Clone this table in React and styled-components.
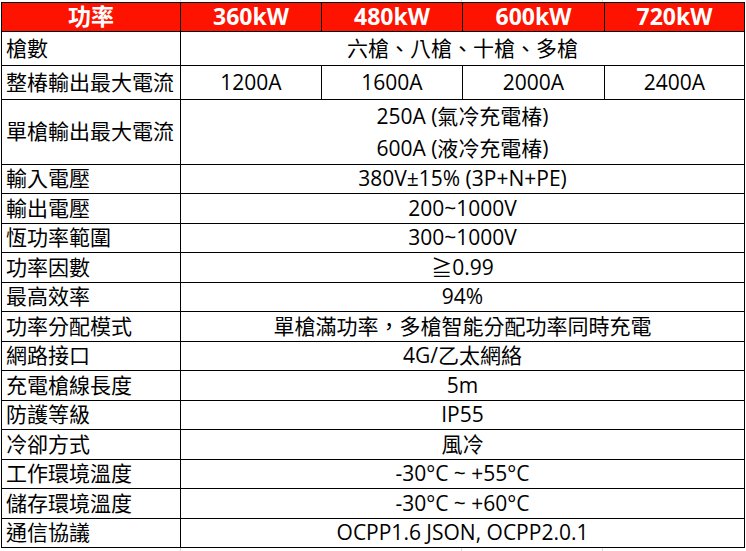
import React from 'react';
import styled, { createGlobalStyle } from 'styled-components';

const GlobalStyle = createGlobalStyle`
  html, body {
    margin: 0;
    padding: 0;
    background-color: #ffffff;
    background-image:
      linear-gradient(#dadada, #dadada),
      linear-gradient(#dadada, #dadada),
      linear-gradient(#dadada, #dadada);
    background-size: 1px 100%;
    background-position: 180px 0, 461px 0, 602px 0;
    background-repeat: no-repeat;
  }
  body {
    font-family: 'Open Sans', 'Noto Sans CJK TC', sans-serif;
    color: #000;
  }
`;

const Wrapper = styled.div`
  padding: 2px 2px 0 1px;
  height: 551px;
  box-sizing: border-box;
`;

const Table = styled.table`
  width: 743px;
  border-collapse: collapse;
  table-layout: fixed;
  background: #fff;
`;

const Row = styled.tr`
  height: ${(p) => p.$h || 29.5}px;
`;

const HeadCell = styled.th`
  background: #fe1200;
  color: #fff;
  font-weight: 700;
  font-size: 23px;
  line-height: 1;
  border: 1px solid #000;
  padding: 0;
  text-align: center;
  vertical-align: middle;
`;

const LabelCell = styled.td`
  border: 1px solid #000;
  font-size: 21px;
  line-height: 1;
  padding: 0 0 0 4px;
  text-align: left;
  vertical-align: middle;
  white-space: nowrap;
`;

const ValueCell = styled.td`
  border: 1px solid #000;
  font-size: 21px;
  line-height: ${(p) => (p.$lines ? '32px' : '1')};
  padding: 0;
  text-align: center;
  vertical-align: middle;
  white-space: nowrap;
`;

const powers = ['360kW', '480kW', '600kW', '720kW'];
const currents = ['1200A', '1600A', '2000A', '2400A'];

const rows = [
  ['輸入電壓', '380V±15% (3P+N+PE)'],
  ['輸出電壓', '200~1000V'],
  ['恆功率範圍', '300~1000V'],
  ['功率因數', '≧0.99'],
  ['最高效率', '94%'],
  ['功率分配模式', '單槍滿功率，多槍智能分配功率同時充電'],
  ['網路接口', '4G/乙太網絡'],
  ['充電槍線長度', '5m'],
  ['防護等級', 'IP55'],
  ['冷卻方式', '風冷'],
  ['工作環境溫度', '-30°C ~ +55°C'],
  ['儲存環境溫度', '-30°C ~ +60°C'],
  ['通信協議', 'OCPP1.6 JSON, OCPP2.0.1'],
];

export default function App() {
  return (
    <Wrapper>
      <GlobalStyle />
      <Table>
        <colgroup>
          <col style={{ width: 179 }} />
          <col style={{ width: 141 }} />
          <col style={{ width: 141 }} />
          <col style={{ width: 142 }} />
          <col style={{ width: 140 }} />
        </colgroup>
        <thead>
          <Row $h={28.5}>
            <HeadCell>功率</HeadCell>
            {powers.map((p) => (
              <HeadCell key={p}>{p}</HeadCell>
            ))}
          </Row>
        </thead>
        <tbody>
          <Row $h={34}>
            <LabelCell>槍數</LabelCell>
            <ValueCell colSpan={4}>六槍、八槍、十槍、多槍</ValueCell>
          </Row>
          <Row $h={34}>
            <LabelCell>整椿輸出最大電流</LabelCell>
            {currents.map((c) => (
              <ValueCell key={c}>{c}</ValueCell>
            ))}
          </Row>
          <Row $h={63.5}>
            <LabelCell>單槍輸出最大電流</LabelCell>
            <ValueCell colSpan={4} $lines>
              250A (氣冷充電椿)
              <br />
              600A (液冷充電椿)
            </ValueCell>
          </Row>
          {rows.map(([label, value]) => (
            <Row key={label}>
              <LabelCell>{label}</LabelCell>
              <ValueCell colSpan={4}>{value}</ValueCell>
            </Row>
          ))}
        </tbody>
      </Table>
    </Wrapper>
  );
}
